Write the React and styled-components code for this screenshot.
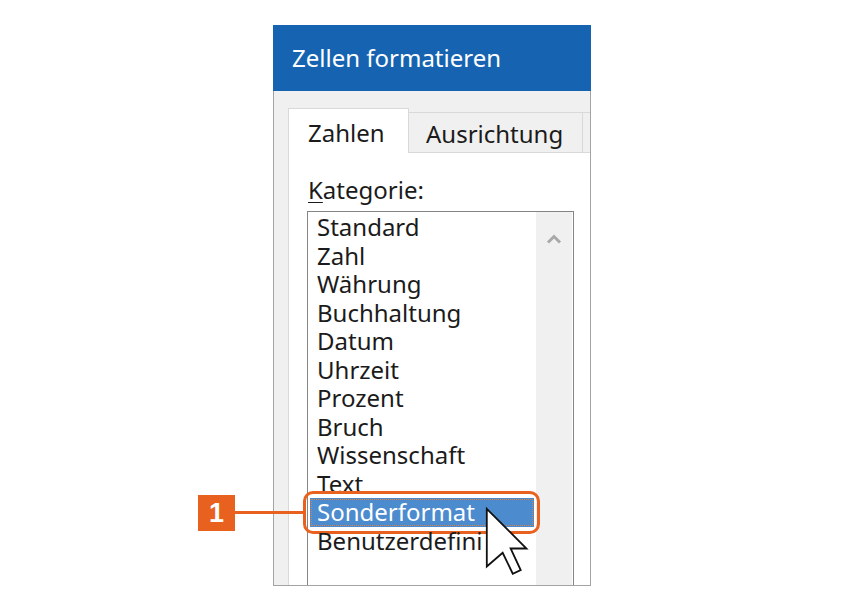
import React from 'react';
import styled, { createGlobalStyle } from 'styled-components';

const GlobalStyle = createGlobalStyle`
  html, body {
    margin: 0;
    padding: 0;
    background: #ffffff;
  }
  body {
    font-family: "Noto Sans", "Open Sans", "Liberation Sans", sans-serif;
    color: #1b1b1b;
  }
`;

const Stage = styled.div`
  width: 850px;
  height: 605px;
  box-sizing: border-box;
  padding: 25px 0 0 273px;
  overflow: hidden;
`;

const Dialog = styled.div`
  width: 318px;
  height: 561px;
  display: flex;
  flex-direction: column;
`;

const TitleBar = styled.div`
  height: 66px;
  flex-shrink: 0;
  background: #1664b1;
  color: #ffffff;
  font-size: 24px;
  display: flex;
  align-items: center;
  padding-left: 19px;
  padding-bottom: 2px;
  box-sizing: border-box;
  white-space: nowrap;
`;

const Body = styled.div`
  flex: 1;
  display: flex;
  flex-direction: column;
  min-height: 0;
  background: #f0f0f0;
  border: 1px solid #a3a3a3;
  border-top: none;
  padding: 17px 0 0 14px;
`;

const TabRow = styled.div`
  display: flex;
  align-items: flex-end;
  height: 45px;
  flex-shrink: 0;
  overflow: hidden;
`;

const Tab = styled.div`
  flex-shrink: 0;
  box-sizing: border-box;
  width: ${({ $w }) => $w}px;
  height: ${({ $active }) => ($active ? 45 : 41)}px;
  background: ${({ $active }) => ($active ? '#ffffff' : '#f0f0f0')};
  border: 1px solid #d9d9d9;
  border-bottom: ${({ $active }) => ($active ? 'none' : '1px solid #d9d9d9')};
  border-left: ${({ $first }) => ($first ? '1px solid #d9d9d9' : 'none')};
  padding-left: ${({ $pad }) => $pad}px;
  padding-top: ${({ $active }) => ($active ? 3 : 2)}px;
  font-size: 24px;
  display: flex;
  align-items: center;
  white-space: nowrap;
`;

const TabFill = styled.div`
  flex: 1;
  border-bottom: 1px solid #d9d9d9;
`;

const Panel = styled.div`
  flex: 1;
  min-height: 0;
  display: flex;
  flex-direction: column;
  background: #ffffff;
  border-left: 1px solid #d9d9d9;
  padding-left: 18px;
`;

const Label = styled.div`
  font-size: 24px;
  line-height: 30px;
  margin: 22px 0 6px 1px;
  white-space: nowrap;
  u {
    text-decoration-thickness: 1px;
    text-underline-offset: 3px;
  }
`;

const ListBox = styled.div`
  width: 267px;
  flex: 1;
  box-sizing: border-box;
  border: 1px solid #858585;
  border-bottom: none;
  display: flex;
`;

const List = styled.div`
  width: 228px;
  box-sizing: border-box;
  padding: 1px 2px 0;
`;

const Row = styled.div`
  position: relative;
  height: 28.55px;
  padding-left: 7px;
  font-size: 24px;
  line-height: 28.55px;
  white-space: nowrap;
  color: ${({ $selected }) => ($selected ? '#ffffff' : '#1b1b1b')};
  background: ${({ $selected }) => ($selected ? '#4c8bcd' : 'transparent')};
  outline: ${({ $selected }) => ($selected ? '1px dotted #e0803a' : 'none')};
  outline-offset: -2px;
`;

const ScrollTrack = styled.div`
  width: 36px;
  margin-left: auto;
  margin-right: 1px;
  background: #f0f0f0;
  display: flex;
  justify-content: center;
  padding-top: 15px;
  box-sizing: border-box;
`;

const Ring = styled.div`
  position: absolute;
  left: -7px;
  right: -6px;
  top: -7px;
  bottom: -7px;
  border: 3px solid #e8611e;
  border-radius: 10px;
`;

const Leader = styled.div`
  position: absolute;
  right: calc(100% + 3px);
  top: 17px;
  width: 68px;
  height: 3px;
  background: #e8611e;
`;

const Badge = styled.div`
  position: absolute;
  right: calc(100% + 71px);
  top: 1px;
  width: 37px;
  height: 36px;
  background: #e8611e;
  color: #ffffff;
  font-family: "Liberation Sans", Arial, sans-serif;
  font-weight: bold;
  font-size: 27px;
  display: flex;
  align-items: center;
  justify-content: center;
`;

const Pointer = styled.svg`
  position: absolute;
  left: 175px;
  top: 9px;
  z-index: 2;
`;

const categories = [
  'Standard',
  'Zahl',
  'Währung',
  'Buchhaltung',
  'Datum',
  'Uhrzeit',
  'Prozent',
  'Bruch',
  'Wissenschaft',
  'Text',
  'Sonderformat',
  'Benutzerdefiniert',
];

function Chevron() {
  return (
    <svg width="16" height="10" viewBox="0 0 16 10">
      <polyline points="2,8.5 8,2.5 14,8.5" fill="none" stroke="#a9a9a9" strokeWidth="3" />
    </svg>
  );
}

function Cursor() {
  return (
    <Pointer width="44" height="70" viewBox="-0.5 -0.5 12.2 19.4">
      <polygon
        points="0,0 11,11 6.6,11 9.4,17 7.2,18 4.4,12.2 0,16"
        fill="#ffffff"
        stroke="#111111"
        strokeWidth="0.5"
        strokeLinejoin="miter"
      />
    </Pointer>
  );
}

export default function App() {
  const selected = 'Sonderformat';

  return (
    <>
      <GlobalStyle />
      <Stage>
        <Dialog>
          <TitleBar>Zellen formatieren</TitleBar>
          <Body>
            <TabRow>
              <Tab $active $first $w={121} $pad={19}>Zahlen</Tab>
              <Tab $w={174} $pad={17}>Ausrichtung</Tab>
              <Tab $w={40} $pad={14} />
              <TabFill />
            </TabRow>
            <Panel>
              <Label><u>K</u>ategorie:</Label>
              <ListBox>
                <List>
                  {categories.map((c) => (
                    <Row key={c} $selected={c === selected}>
                      {c === 'Benutzerdefiniert' ? 'Benutzerdefini' : c}
                      {c === selected && (
                        <>
                          <Ring>
                            <Leader />
                            <Badge>1</Badge>
                          </Ring>
                          <Cursor />
                        </>
                      )}
                    </Row>
                  ))}
                </List>
                <ScrollTrack>
                  <div><Chevron /></div>
                </ScrollTrack>
              </ListBox>
            </Panel>
          </Body>
        </Dialog>
      </Stage>
    </>
  );
}
